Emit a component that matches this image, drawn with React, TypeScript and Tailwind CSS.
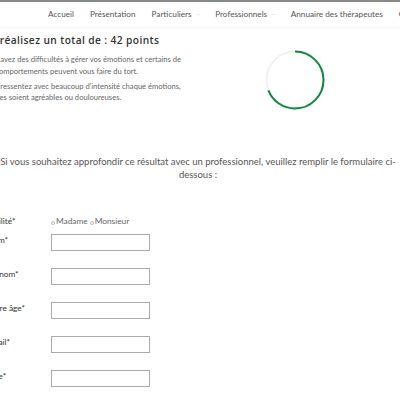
import React from 'react'

const nav = [
  { label: 'Accueil' },
  { label: 'Présentation' },
  { label: 'Particuliers', sub: true },
  { label: 'Professionnels', sub: true },
  { label: 'Annuaire des thérapeutes' },
  { label: 'Contact' },
]

const champs = ['Nom*', 'Prénom*', 'Votre âge*', 'Email*', 'Ville*']

function Cercle({ pct }: { pct: number }) {
  const r = 28.5
  const c = 2 * Math.PI * r
  return (
    <svg width="62" height="62" viewBox="0 0 62 62" className="block">
      <circle cx="31" cy="31" r={r} fill="none" stroke="#f1f1f1" strokeWidth="2" />
      <circle
        cx="31" cy="31" r={r} fill="none" stroke="#0b8a3b" strokeWidth="2"
        strokeDasharray={`${c * pct} ${c}`}
        transform="rotate(-90 31 31)"
      />
    </svg>
  )
}

export default function App() {
  return (
    <div className="w-[400px] h-[400px] overflow-hidden bg-white font-['Lato',sans-serif] text-[#555]">
      {/* barre du haut */}
      <div className="h-[2px] bg-[#8a8a8a]" />
      <nav className="h-[25px] flex items-center pl-[48px] gap-[16px] text-[8.2px] text-[#555] whitespace-nowrap shadow-[0_1px_2px_rgba(0,0,0,0.06)]">
        {nav.map(n => (
          <span key={n.label} className="flex items-center">
            {n.label}
            {n.sub && <span className="ml-[5px] text-[#ccc] text-[7px]">-</span>}
          </span>
        ))}
      </nav>

      <div className="flex mt-[6px]">
        <div className="w-[293px] shrink-0 -ml-[29px]">
          <h2 className="font-['Open_Sans',sans-serif] font-semibold text-[10.2px] tracking-[0.4px] text-[#333] leading-[14px] whitespace-nowrap">
            Vous réalisez un total de : 42 points
          </h2>
          <p className="mt-[6px] ml-[11px] text-[7.6px] leading-[12px] text-[#666] whitespace-nowrap">
            Vous avez des difficultés à gérer vos émotions et certains de<br />
            vos comportements peuvent vous faire du tort.
          </p>
          <p className="mt-[4px] ml-[11px] text-[7.6px] leading-[11px] text-[#666] whitespace-nowrap">
            Vous ressentez avec beaucoup d'intensité chaque émotions,<br />
            qu'elles soient agréables ou douloureuses.
          </p>
        </div>
        <div className="mt-[16px]">
          <Cercle pct={0.69} />
        </div>
      </div>

      <p className="mt-[44px] -ml-[3px] w-[402px] text-center text-[9.5px] leading-[13px] text-[#555] whitespace-nowrap">
        Si vous souhaitez approfondir ce résultat avec un professionnel, veuillez remplir le formulaire ci-<br />
        dessous :
      </p>

      <form className="mt-[33px] -ml-[13px] text-[8.3px] text-[#333]">
        <div className="flex items-center h-[14px]">
          <label className="w-[64px]">Civilité*</label>
          <div className="flex items-center text-[#666]">
            <span className="w-[4px] h-[4px] rounded-full border border-[#bbb] mt-[4px]" />
            <span className="ml-[1px]">Madame</span>
            <span className="w-[4px] h-[4px] rounded-full border border-[#bbb] mt-[4px] ml-[2px]" />
            <span className="ml-[1px]">Monsieur</span>
          </div>
        </div>
        <div className="mt-[6px] flex flex-col gap-[17px]">
          {champs.map(c => (
            <div key={c} className="flex items-start">
              <label className="w-[64px]">{c}</label>
              <input className="w-[99px] h-[17px] border border-[#aaa] bg-white outline-none" />
            </div>
          ))}
        </div>
      </form>
    </div>
  )
}
